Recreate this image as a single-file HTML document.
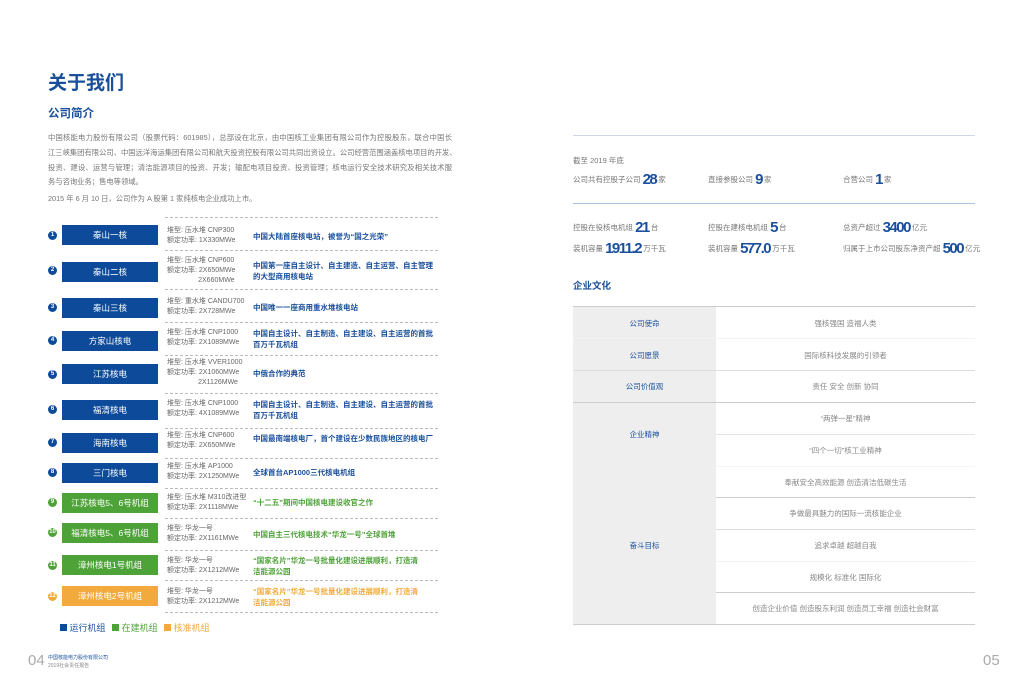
<!DOCTYPE html>
<html><head><meta charset="utf-8"><style>
*{margin:0;padding:0;box-sizing:border-box}
body{width:1024px;height:695px;background:#fff;position:relative;overflow:hidden;font-family:"Liberation Sans","Noto Sans CJK SC",sans-serif;color:#666}
.a{position:absolute;white-space:nowrap}
.blue{color:#1a4f9c}
.p{font-size:8px;color:#777;line-height:15px}
.ln{position:absolute;left:48px;width:404px;font-size:7.3px;color:#777;line-height:15px;text-align:justify;text-align-last:justify;white-space:nowrap;overflow:visible}
.box{position:absolute;left:62px;width:96px;height:20px;color:#fff;font-size:8.5px;text-align:center;line-height:20px}
.bb{background:#0d4b9a}.bg{background:#4ea338}.bo{background:#f2aa3c}
.num{position:absolute;left:48px;width:9px;height:9px;border-radius:50%;color:#fff;font-size:6px;text-align:center;line-height:9px;font-weight:bold}
.spec{position:absolute;left:167px;font-size:7px;color:#666;line-height:10px;white-space:nowrap}
.desc{position:absolute;left:253px;font-size:7.5px;line-height:11px;white-space:nowrap;font-weight:bold}
.sep{position:absolute;left:165px;width:273px;border-top:1px dashed #bbb}
.st{font-size:7.5px;color:#777}
.big{font-size:15px;font-weight:bold;color:#1a4f9c;letter-spacing:-1.5px;vertical-align:-2px}
.cell{position:absolute;font-size:7.5px;text-align:center;color:#888}
.lc{color:#1a4f9c}
</style></head><body>
<div class="a blue" style="left:48px;top:68px;font-size:19px;font-weight:bold">关于我们</div>
<div class="a blue" style="left:48px;top:105px;font-size:11.5px;font-weight:bold">公司简介</div>
<div class="ln" style="top:130px">中国核能电力股份有限公司（股票代码：601985），总部设在北京，由中国核工业集团有限公司作为控股股东，联合中国长</div>
<div class="ln" style="top:145px">江三峡集团有限公司、中国远洋海运集团有限公司和航天投资控股有限公司共同出资设立。公司经营范围涵盖核电项目的开发、</div>
<div class="ln" style="top:160px">投资、建设、运营与管理；清洁能源项目的投资、开发；输配电项目投资、投资管理；核电运行安全技术研究及相关技术服</div>
<div class="a" style="left:48px;top:174px;font-size:7.3px;color:#777;line-height:15px">务与咨询业务；售电等领域。</div>
<div class="a" style="left:48px;top:191px;font-size:7.3px;color:#777;line-height:15px">2015 年 6 月 10 日，公司作为 A 股第 1 家纯核电企业成功上市。</div>

<div class="sep" style="top:217px"></div>
<div class="num bb" style="top:231px">1</div><div class="box bb" style="top:225px">秦山一核</div>
<div class="spec" style="top:226px">堆型: 压水堆 CNP300<br>额定功率: 1X330MWe</div>
<div class="desc blue" style="top:231px">中国大陆首座核电站，被誉为“国之光荣”</div>
<div class="sep" style="top:250px"></div>
<div class="num bb" style="top:266px">2</div><div class="box bb" style="top:262px">秦山二核</div>
<div class="spec" style="top:256px">堆型: 压水堆 CNP600<br>额定功率: 2X650MWe<br>&nbsp;&nbsp;&nbsp;&nbsp;&nbsp;&nbsp;&nbsp;&nbsp;&nbsp;&nbsp;&nbsp;&nbsp;&nbsp;&nbsp;&nbsp;&nbsp;2X660MWe</div>
<div class="desc blue" style="top:260px">中国第一座自主设计、自主建造、自主运营、自主管理<br>的大型商用核电站</div>
<div class="sep" style="top:289px"></div>
<div class="num bb" style="top:303px">3</div><div class="box bb" style="top:298px">秦山三核</div>
<div class="spec" style="top:297px">堆型: 重水堆 CANDU700<br>额定功率: 2X728MWe</div>
<div class="desc blue" style="top:302px">中国唯一一座商用重水堆核电站</div>
<div class="sep" style="top:322px"></div>
<div class="num bb" style="top:336px">4</div><div class="box bb" style="top:331px">方家山核电</div>
<div class="spec" style="top:328px">堆型: 压水堆 CNP1000<br>额定功率: 2X1089MWe</div>
<div class="desc blue" style="top:328px">中国自主设计、自主制造、自主建设、自主运营的首批<br>百万千瓦机组</div>
<div class="sep" style="top:355px"></div>
<div class="num bb" style="top:370px">5</div><div class="box bb" style="top:364px">江苏核电</div>
<div class="spec" style="top:358px">堆型: 压水堆 VVER1000<br>额定功率: 2X1060MWe<br>&nbsp;&nbsp;&nbsp;&nbsp;&nbsp;&nbsp;&nbsp;&nbsp;&nbsp;&nbsp;&nbsp;&nbsp;&nbsp;&nbsp;&nbsp;&nbsp;2X1126MWe</div>
<div class="desc blue" style="top:368px">中俄合作的典范</div>
<div class="sep" style="top:393px"></div>
<div class="num bb" style="top:405px">6</div><div class="box bb" style="top:400px">福清核电</div>
<div class="spec" style="top:399px">堆型: 压水堆 CNP1000<br>额定功率: 4X1089MWe</div>
<div class="desc blue" style="top:399px">中国自主设计、自主制造、自主建设、自主运营的首批<br>百万千瓦机组</div>
<div class="sep" style="top:428px"></div>
<div class="num bb" style="top:438px">7</div><div class="box bb" style="top:433px">海南核电</div>
<div class="spec" style="top:431px">堆型: 压水堆 CNP600<br>额定功率: 2X650MWe</div>
<div class="desc blue" style="top:433px">中国最南端核电厂，首个建设在少数民族地区的核电厂</div>
<div class="sep" style="top:458px"></div>
<div class="num bb" style="top:468px">8</div><div class="box bb" style="top:463px">三门核电</div>
<div class="spec" style="top:462px">堆型: 压水堆 AP1000<br>额定功率: 2X1250MWe</div>
<div class="desc blue" style="top:467px">全球首台AP1000三代核电机组</div>
<div class="sep" style="top:488px"></div>
<div class="num bg" style="top:498px">9</div><div class="box bg" style="top:493px">江苏核电5、6号机组</div>
<div class="spec" style="top:493px">堆型: 压水堆 M310改进型<br>额定功率: 2X1118MWe</div>
<div class="desc" style="top:497px;color:#4ea338">“十二五”期间中国核电建设收官之作</div>
<div class="sep" style="top:518px"></div>
<div class="num bg" style="top:528px">10</div><div class="box bg" style="top:523px">福清核电5、6号机组</div>
<div class="spec" style="top:524px">堆型: 华龙一号<br>额定功率: 2X1161MWe</div>
<div class="desc" style="top:529px;color:#4ea338">中国自主三代核电技术“华龙一号”全球首堆</div>
<div class="sep" style="top:550px"></div>
<div class="num bg" style="top:561px">11</div><div class="box bg" style="top:555px">漳州核电1号机组</div>
<div class="spec" style="top:556px">堆型:  华龙一号<br>额定功率:  2X1212MWe</div>
<div class="desc" style="top:555px;color:#4ea338">“国家名片”华龙一号批量化建设进展顺利，打造清<br>洁能源公园</div>
<div class="sep" style="top:580px"></div>
<div class="num bo" style="top:592px">12</div><div class="box bo" style="top:586px">漳州核电2号机组</div>
<div class="spec" style="top:587px">堆型:  华龙一号<br>额定功率:  2X1212MWe</div>
<div class="desc" style="top:586px;color:#f2aa3c">“国家名片”华龙一号批量化建设进展顺利，打造清<br>洁能源公园</div>
<div class="sep" style="top:612px"></div>

<div class="a" style="left:60px;top:622px;font-size:9px;line-height:12px"><span style="display:inline-block;width:7px;height:7px;background:#0d4b9a"></span> <span class="blue">运行机组</span> <span style="display:inline-block;width:7px;height:7px;background:#4ea338;margin-left:4px"></span> <span style="color:#4ea338">在建机组</span> <span style="display:inline-block;width:7px;height:7px;background:#f2aa3c;margin-left:4px"></span> <span style="color:#f2aa3c">核准机组</span></div>

<div class="a" style="left:28px;top:652px;font-size:15px;color:#aaa;font-weight:300">04</div>
<div class="a blue" style="left:48px;top:654px;font-size:5px;line-height:8px">中国核能电力股份有限公司<br><span style="color:#888">2019社会责任报告</span></div>
<div class="a" style="left:983px;top:652px;font-size:15px;color:#aaa">05</div>

<div class="a" style="left:573px;top:135px;width:402px;border-top:1px solid #cbd8e8"></div>
<div class="a st" style="left:573px;top:155px">截至 2019 年底</div>
<div class="a st" style="left:573px;top:171px">公司共有控股子公司 <span class="big">28</span> 家</div>
<div class="a st" style="left:708px;top:171px">直接参股公司 <span class="big">9</span> 家</div>
<div class="a st" style="left:843px;top:171px">合营公司 <span class="big">1</span> 家</div>
<div class="a" style="left:573px;top:203px;width:402px;border-top:1px solid #a9c3e0"></div>
<div class="a st" style="left:573px;top:219px">控股在役核电机组 <span class="big">21</span> 台</div>
<div class="a st" style="left:708px;top:219px">控股在建核电机组 <span class="big">5</span> 台</div>
<div class="a st" style="left:843px;top:219px">总资产超过 <span class="big">3400</span> 亿元</div>
<div class="a st" style="left:573px;top:240px">装机容量 <span class="big">1911.2</span> 万千瓦</div>
<div class="a st" style="left:708px;top:240px">装机容量 <span class="big">577.0</span> 万千瓦</div>
<div class="a st" style="left:843px;top:240px">归属于上市公司股东净资产超 <span class="big">500</span> 亿元</div>
<div class="a blue" style="left:573px;top:278px;font-size:9.5px;font-weight:bold">企业文化</div>

<div class="a" style="left:573px;top:307px;width:143px;height:317px;background:#eeeeee"></div>
<div class="a" style="left:573px;top:306px;width:402px;border-top:1px solid #ccc"></div>
<div class="a" style="left:573px;top:338px;width:402px;border-top:1px solid #f3f3f3"></div>
<div class="a" style="left:573px;top:370px;width:402px;border-top:1px solid #ddd"></div>
<div class="a" style="left:573px;top:402px;width:402px;border-top:1px solid #ccc"></div>
<div class="a" style="left:716px;top:434px;width:259px;border-top:1px solid #e4e4e4"></div>
<div class="a" style="left:716px;top:466px;width:259px;border-top:1px solid #f5f5f5"></div>
<div class="a" style="left:716px;top:497px;width:259px;border-top:1px solid #ccc"></div>
<div class="a" style="left:716px;top:529px;width:259px;border-top:1px solid #ddd"></div>
<div class="a" style="left:716px;top:561px;width:259px;border-top:1px solid #f3f3f3"></div>
<div class="a" style="left:716px;top:592px;width:259px;border-top:1px solid #ccc"></div>
<div class="a" style="left:573px;top:624px;width:402px;border-top:1px solid #ccc"></div>

<div class="cell lc" style="left:573px;width:143px;top:318px">公司使命</div>
<div class="cell lc" style="left:573px;width:143px;top:350px">公司愿景</div>
<div class="cell lc" style="left:573px;width:143px;top:381px">公司价值观</div>
<div class="cell lc" style="left:573px;width:143px;top:429px">企业精神</div>
<div class="cell lc" style="left:573px;width:143px;top:540px">奋斗目标</div>
<div class="cell" style="left:716px;width:259px;top:318px">强核强国 造福人类</div>
<div class="cell" style="left:716px;width:259px;top:350px">国际核科技发展的引领者</div>
<div class="cell" style="left:716px;width:259px;top:381px">责任 安全 创新 协同</div>
<div class="cell" style="left:716px;width:259px;top:413px">“两弹一星”精神</div>
<div class="cell" style="left:716px;width:259px;top:445px">“四个一切”核工业精神</div>
<div class="cell" style="left:716px;width:259px;top:477px">奉献安全高效能源 创造清洁低碳生活</div>
<div class="cell" style="left:716px;width:259px;top:508px">争做最具魅力的国际一流核能企业</div>
<div class="cell" style="left:716px;width:259px;top:540px">追求卓越 超越自我</div>
<div class="cell" style="left:716px;width:259px;top:572px">规模化 标准化 国际化</div>
<div class="cell" style="left:716px;width:259px;top:603px">创造企业价值 创造股东利润 创造员工幸福 创造社会财富</div>
</body></html>
